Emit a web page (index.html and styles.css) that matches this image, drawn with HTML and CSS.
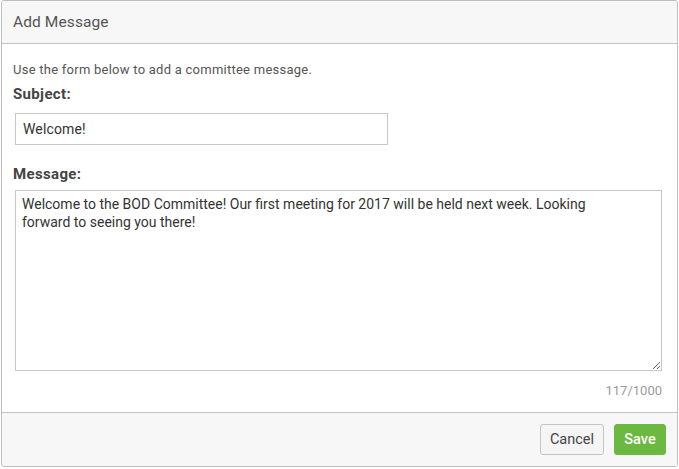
FILE: index.html
```html
<!DOCTYPE html>
<html>
<head>
<meta charset="utf-8">
<link rel="stylesheet" href="styles.css">
</head>
<body>
<div class="modal">
  <div class="modal-header">
    <h4 class="modal-title">Add Message</h4>
  </div>
  <div class="modal-body">
    <p class="intro">Use the form below to add a committee message.</p>
    <label class="field-label">Subject:</label>
    <input class="subject-input" type="text" value="Welcome!">
    <label class="field-label message-label">Message:</label>
    <textarea class="message-input">Welcome to the BOD Committee! Our first meeting for 2017 will be held next week. Looking forward to seeing you there!</textarea>
    <div class="counter">117/1000</div>
  </div>
  <div class="modal-footer">
    <button class="btn btn-cancel">Cancel</button>
    <button class="btn btn-save">Save</button>
  </div>
</div>
</body>
</html>
```
FILE: styles.css
```css
html, body {
  margin: 0;
  padding: 0;
  background: #ffffff;
}
body {
  font-family: Roboto, "Liberation Sans", sans-serif;
  color: #333;
}
.modal {
  box-sizing: border-box;
  width: 677px;
  height: 467px;
  margin: 0 0 0 1px;
  border: 1px solid #bdbdbd;
  border-radius: 3px;
  background: #fff;
  display: flex;
  flex-direction: column;
  overflow: hidden;
}
.modal-header {
  height: 43px;
  box-sizing: border-box;
  background: #f7f7f7;
  border-bottom: 1px solid #c4c4c4;
  padding: 0 11px;
  display: flex;
  align-items: center;
}
.modal-title {
  margin: 0;
  font-size: 15.5px;
  font-weight: 400;
  letter-spacing: 0.1px;
  color: #555;
}
.modal-body {
  flex: 1;
  padding: 18px 15px 0 11px;
  display: flex;
  flex-direction: column;
}
.intro {
  margin: 0;
  font-size: 13px;
  letter-spacing: 0.25px;
  line-height: 16px;
  color: #555;
}
.field-label {
  display: block;
  font-size: 15px;
  font-weight: 700;
  letter-spacing: 0.35px;
  color: #444;
  margin-top: 7px;
  line-height: 18px;
}
.message-label {
  margin-top: 20px;
}
.subject-input {
  box-sizing: border-box;
  margin: 10px 0 0 2px;
  width: 373px;
  height: 32px;
  border: 1px solid #c8c8c8;
  border-radius: 0;
  padding: 0 7px;
  font-family: Roboto, "Liberation Sans", sans-serif;
  font-size: 14px;
  letter-spacing: 0.15px;
  color: #333;
  outline: none;
}
.message-input {
  box-sizing: border-box;
  margin: 7px 0 0 2px;
  width: 647px;
  height: 181px;
  border: 1px solid #c8c8c8;
  border-radius: 0;
  padding: 4px 32px 4px 6px;
  font-family: Roboto, "Liberation Sans", sans-serif;
  font-size: 14px;
  letter-spacing: 0;
  line-height: 18px;
  color: #333;
  resize: vertical;
  outline: none;
}
.counter {
  text-align: right;
  font-size: 13px;
  color: #9a9a9a;
  margin-top: 12px;
  line-height: 16px;
}
.modal-footer {
  height: 54px;
  box-sizing: border-box;
  background: #f7f7f7;
  border-top: 1px solid #c4c4c4;
  padding: 0 11px 0 0;
  display: flex;
  align-items: center;
  justify-content: flex-end;
  gap: 10px;
}
.btn {
  box-sizing: border-box;
  height: 31px;
  font-family: Roboto, "Liberation Sans", sans-serif;
  font-size: 14.5px;
  border-radius: 3px;
  padding: 0;
  cursor: pointer;
}
.btn-cancel {
  background: #f5f5f5;
  border: 1px solid #c4c4c4;
  color: #444;
  width: 64px;
}
.btn-save {
  background: #6cb941;
  border: 1px solid #6cb941;
  color: #fff;
  font-weight: 500;
  width: 52px;
}
```
